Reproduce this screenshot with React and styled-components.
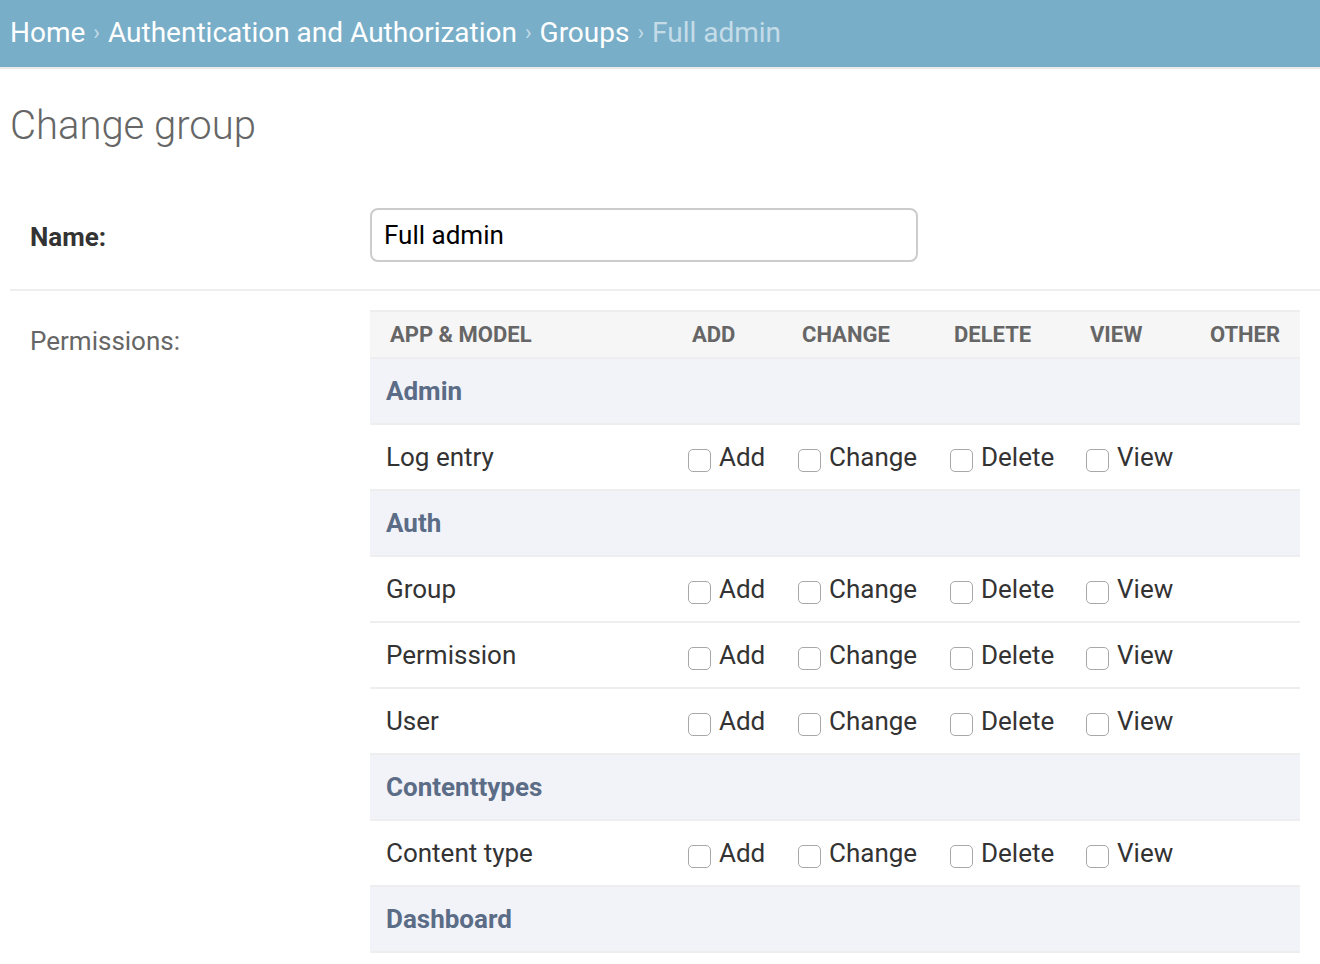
import React from 'react'
import styled, { createGlobalStyle } from 'styled-components'

const GlobalStyle = createGlobalStyle`
    body {
        margin: 0;
        background: #fff;
        font-family: Roboto, "Liberation Sans", sans-serif;
        color: #333;
    }
`

const Breadcrumbs = styled.div`
    box-sizing: border-box;
    height: 69px;
    background: #79aec8;
    border-bottom: 2px solid #eaeaea;
    display: flex;
    align-items: center;
    padding: 0 10px 2px 10px;
    font-size: 28px;
    color: #fff;
    white-space: nowrap;
`

const Crumb = styled.span`
    color: ${props => props.current ? '#c4dce8' : '#fff'};
`

const Sep = styled.span`
    color: #c4dce8;
    margin: 0 8px;
    font-size: 22px;
`

const Content = styled.div`
    padding: 0 0 0 10px;
`

const Title = styled.h1`
    margin: 0;
    padding: 32px 0 0 0;
    font-size: 40px;
    font-weight: 300;
    color: #666;
    line-height: 50px;
`

const FormRow = styled.div`
    display: flex;
    align-items: ${props => props.top ? 'flex-start' : 'center'};
    padding: ${props => props.top ? '19px 20px 0 20px' : '57px 20px 27px 20px'};
    border-bottom: ${props => props.last ? 'none' : '2px solid #eee'};
`

const Label = styled.label`
    width: 340px;
    flex-shrink: 0;
    font-size: 26px;
    font-weight: ${props => props.required ? 700 : 400};
    color: ${props => props.required ? '#333' : '#666'};
    padding-top: ${props => props.top ? '16px' : '4px'};
`

const TextInput = styled.input`
    box-sizing: border-box;
    width: 548px;
    height: 54px;
    border: 2px solid #ccc;
    border-radius: 8px;
    padding: 0 12px;
    font-family: Roboto, "Liberation Sans", sans-serif;
    font-size: 26px;
    color: #000;
    outline: none;
`

const Table = styled.div`
    width: 930px;
    border-top: 2px solid #eee;
`

const Row = styled.div`
    display: grid;
    grid-template-columns: 306px 110px 152px 136px 120px 1fr;
    align-items: center;
    height: ${props => props.head ? '45px' : '64px'};
    border-bottom: 2px solid #eee;
    background: ${props => props.head ? '#f6f6f6' : props.group ? '#f2f3f8' : '#fff'};
`

const HeadCell = styled.div`
    font-size: 22px;
    font-weight: 700;
    color: #666;
    text-transform: uppercase;
    padding-left: ${props => props.first ? '20px' : '16px'};
`

const GroupCell = styled.div`
    grid-column: 1 / -1;
    padding-left: 16px;
    font-size: 26px;
    font-weight: 700;
    color: #5b6c87;
`

const ModelCell = styled.div`
    padding-left: 16px;
    font-size: 26px;
    color: #333;
`

const PermCell = styled.label`
    display: flex;
    align-items: center;
    padding-left: 12px;
    font-size: 26px;
    color: #333;
`

const Box = styled.span`
    box-sizing: border-box;
    width: 23px;
    height: 23px;
    border: 1.5px solid #a8a8a8;
    border-radius: 5px;
    margin: 6px 8px 0 0;
    flex-shrink: 0;
    background: #fff;
`

const perms = ['Add', 'Change', 'Delete', 'View']

const data = [
    { app: 'Admin', models: ['Log entry'] },
    { app: 'Auth', models: ['Group', 'Permission', 'User'] },
    { app: 'Contenttypes', models: ['Content type'] },
    { app: 'Dashboard', models: [] },
]

export default function App() {
    return (
        <>
            <GlobalStyle />
            <Breadcrumbs>
                <Crumb>Home</Crumb><Sep>›</Sep>
                <Crumb>Authentication and Authorization</Crumb><Sep>›</Sep>
                <Crumb>Groups</Crumb><Sep>›</Sep>
                <Crumb current>Full admin</Crumb>
            </Breadcrumbs>
            <Content>
                <Title>Change group</Title>
                <FormRow>
                    <Label required>Name:</Label>
                    <TextInput defaultValue="Full admin" />
                </FormRow>
                <FormRow top last>
                    <Label top>Permissions:</Label>
                    <Table>
                        <Row head>
                            <HeadCell first>App &amp; model</HeadCell>
                            <HeadCell>Add</HeadCell>
                            <HeadCell>Change</HeadCell>
                            <HeadCell>Delete</HeadCell>
                            <HeadCell>View</HeadCell>
                            <HeadCell>Other</HeadCell>
                        </Row>
                        {data.map(group => (
                            <React.Fragment key={group.app}>
                                <Row group>
                                    <GroupCell>{group.app}</GroupCell>
                                </Row>
                                {group.models.map(model => (
                                    <Row key={model}>
                                        <ModelCell>{model}</ModelCell>
                                        {perms.map(p => (
                                            <PermCell key={p}><Box />{p}</PermCell>
                                        ))}
                                        <div />
                                    </Row>
                                ))}
                            </React.Fragment>
                        ))}
                    </Table>
                </FormRow>
            </Content>
        </>
    )
}
